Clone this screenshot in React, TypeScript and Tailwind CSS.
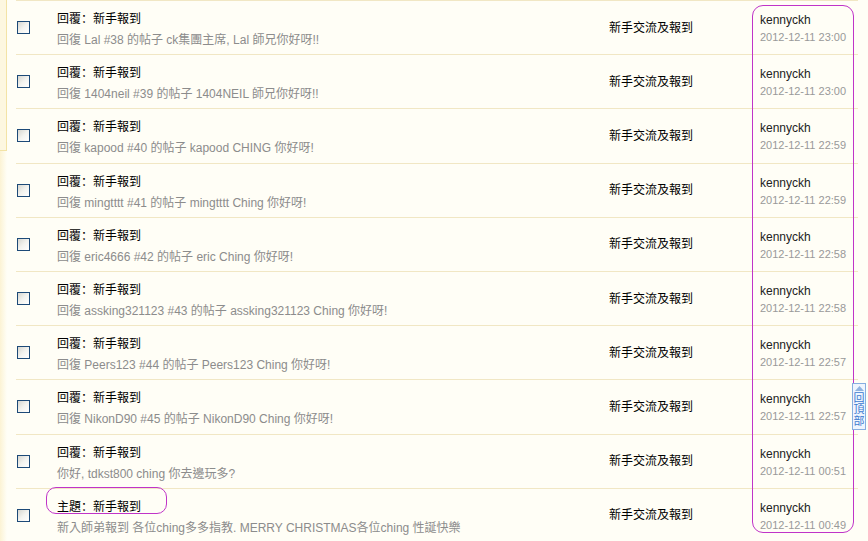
import React from "react";

type Row = { head: string; sub: string; time: string };

const rows: Row[] = [
  { head: "回覆", sub: "回復 Lal #38 的帖子 ck集團主席, Lal 師兄你好呀!!", time: "2012-12-11 23:00" },
  { head: "回覆", sub: "回復 1404neil #39 的帖子 1404NEIL 師兄你好呀!!", time: "2012-12-11 23:00" },
  { head: "回覆", sub: "回復 kapood #40 的帖子 kapood CHING 你好呀!", time: "2012-12-11 22:59" },
  { head: "回覆", sub: "回復 mingtttt #41 的帖子 mingtttt Ching 你好呀!", time: "2012-12-11 22:59" },
  { head: "回覆", sub: "回復 eric4666 #42 的帖子 eric Ching 你好呀!", time: "2012-12-11 22:58" },
  { head: "回覆", sub: "回復 assking321123 #43 的帖子 assking321123 Ching 你好呀!", time: "2012-12-11 22:58" },
  { head: "回覆", sub: "回復 Peers123 #44 的帖子 Peers123 Ching 你好呀!", time: "2012-12-11 22:57" },
  { head: "回覆", sub: "回復 NikonD90 #45 的帖子 NikonD90 Ching 你好呀!", time: "2012-12-11 22:57" },
  { head: "回覆", sub: "你好, tdkst800 ching 你去邊玩多?", time: "2012-12-11 00:51" },
  { head: "主題", sub: "新入師弟報到 各位ching多多指教. MERRY CHRISTMAS各位ching 性誕快樂", time: "2012-12-11 00:49" },
];

export default function App() {
  return (
    <div
      className="relative w-[868px] h-[541px] overflow-hidden bg-[#fffef6] flex"
      style={{ fontFamily: '"Liberation Sans", "Noto Sans CJK TC", sans-serif' }}
    >
      {/* left strip */}
      <div className="w-[7px] flex flex-col shrink-0">
        <div className="h-[151px] bg-[#fdf7e0] border-r border-b border-[#f3e3a6]" />
        <div className="flex-1 bg-gradient-to-r from-[#fcf3d4] to-[#fffef6]" />
      </div>

      {/* table */}
      <div className="ml-[9px] w-[842px] flex flex-col">
        {rows.map((r, i) => (
          <div
            key={i}
            className="h-[54.2px] shrink-0 border-t border-[#f1e7c4] grid grid-cols-[41px_552px_151px_98px]"
          >
            <div className="flex items-center pl-[1px]">
              <div className="w-[13px] h-[13px] border border-[#1d4a78] bg-gradient-to-br from-[#d6d6d0] via-[#f3f3ef] to-white" />
            </div>
            <div className="pt-[9px] text-[12px]">
              <div className="leading-[16px] text-black whitespace-nowrap">
                {r.head}
                <span style={{ fontFamily: '"Noto Sans CJK SC", sans-serif' }}>：</span>
                新手報到
              </div>
              <div className="leading-[16px] mt-[5px] text-[#8c8c8c] whitespace-nowrap">{r.sub}</div>
            </div>
            <div className="flex items-center text-[12px] text-black">新手交流及報到</div>
            <div className="pt-[11px]">
              <div className="text-[12px] leading-[16px] text-[#222]">kennyckh</div>
              <div className="text-[11px] leading-[14px] mt-[2px] text-[#999]">{r.time}</div>
            </div>
          </div>
        ))}
      </div>

      {/* annotations */}
      <div className="absolute left-[752px] top-[5px] w-[102px] h-[528px] border-[1.5px] border-[#c034c8] rounded-[11px] pointer-events-none" />
      <div className="absolute left-[46px] top-[487px] w-[121px] h-[27px] border-[1.5px] border-[#c034c8] rounded-[10px] pointer-events-none" />

      {/* back to top */}
      <div className="absolute left-[852px] top-[383px] w-[14px] h-[47px] border border-[#86aee0] bg-[#eef5fe] flex flex-col items-center pt-[2px] overflow-hidden">
        <svg width="9" height="5" viewBox="0 0 9 5" className="shrink-0">
          <polygon points="4.5,0 9,5 0,5" fill="#8fb3e0" />
        </svg>
        <div
          className="[writing-mode:vertical-rl] whitespace-nowrap shrink-0 text-[11px] leading-[12px] tracking-[0.5px] text-[#3d7ad0] mt-[1px]"
          style={{ fontFamily: '"Noto Sans CJK TC", sans-serif' }}
        >
          回頂部
        </div>
      </div>
    </div>
  );
}
